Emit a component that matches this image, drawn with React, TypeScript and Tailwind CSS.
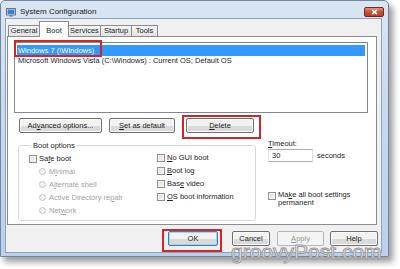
import React from "react";

function Check() {
  return (
    <span className="inline-block h-[8px] w-[8px] shrink-0 border border-[#8e8f8f] bg-linear-to-br from-[#d8d8d8] to-[#fafafa] shadow-[inset_0_0_0_1px_#f4f4f4]" />
  );
}

function Radio() {
  return (
    <span className="inline-block h-[7px] w-[7px] shrink-0 rounded-full border border-[#c4c4c4] bg-[#f2f2f2]" />
  );
}

function Btn(props: {
  w: string;
  children: React.ReactNode;
  primary?: boolean;
  disabled?: boolean;
}) {
  const base =
    "flex h-[15px] shrink-0 items-center justify-center rounded-[2px] border leading-none";
  const look = props.disabled
    ? "border-[#b5b8bb] bg-[#f4f4f4] text-[#9a9a9a]"
    : props.primary
      ? "border-[#3c7fb1] bg-linear-to-b from-[#f2f2f2] from-50% to-[#dadada] to-50% shadow-[inset_0_0_0_1px_#9ed4f3]"
      : "border-[#707070] bg-linear-to-b from-[#f2f2f2] from-50% to-[#dadada] to-50% shadow-[inset_0_0_0_1px_#fbfbfb]";
  return <div className={`${base} ${look} ${props.w}`}>{props.children}</div>;
}

function U({ c }: { c: string }) {
  return <span className="underline underline-offset-1">{c}</span>;
}

export default function App() {
  return (
    <div className="relative h-[269px] w-[400px] overflow-hidden bg-white font-['Liberation_Sans',Arial,sans-serif] text-[7.5px] text-[#1e1e1e]">
      {/* window */}
      <div className="flex h-[257px] w-[389px] flex-col rounded-t-[5px] border border-[#72869f] bg-linear-to-b from-[#dae5f3] via-[#c6d8ee] to-[#bad0ea] shadow-[4px_5px_6px_rgba(0,0,0,0.4)]">
        {/* title bar */}
        <div className="flex h-[17px] shrink-0 items-start">
          <svg width="10" height="9" viewBox="0 0 10 9" className="ml-[5px] mt-[7px]">
            <rect x="0.5" y="0.5" width="9" height="6.5" fill="#e9eef5" stroke="#6b7687" />
            <rect x="1.5" y="1.5" width="7" height="4.5" fill="#3a7fd0" />
            <rect x="3" y="7" width="4" height="1.6" fill="#7c8796" />
          </svg>
          <span className="ml-[4px] mt-[6px] text-[8px] leading-[10px] text-[#1a1a1a]">
            System Configuration
          </span>
          <div className="ml-auto mr-[4px] mt-[6px] flex h-[10px] w-[20px] items-center justify-center rounded-[2px] border border-[#6e2a20] bg-linear-to-b from-[#e3937f] via-[#c94c36] to-[#b8412b]">
            <svg width="7" height="6" viewBox="0 0 7 6">
              <path d="M1 0.8 L6 5.2 M6 0.8 L1 5.2" stroke="#fff" strokeWidth="1.6" />
            </svg>
          </div>
        </div>

        {/* client area */}
        <div className="ml-[4px] mr-[6px] flex h-[235px] flex-col border border-[#8ea3bd] bg-[#f0f0f0]">
          {/* tabs */}
          <div className="flex h-[17px] items-end pl-[3px] pt-[2px]">
            {[
              ["General", "w-[32px]"],
              ["Boot", "w-[30px]"],
              ["Services", "w-[33px]"],
              ["Startup", "w-[32px]"],
              ["Tools", "w-[27px]"],
            ].map(([t, w], i) =>
              i === 1 ? (
                <div
                  key={t}
                  className={`relative z-10 -mb-px -ml-px flex h-[16px] items-start justify-center border border-b-0 border-[#898c95] bg-white pt-[3px] ${w}`}
                >
                  {t}
                </div>
              ) : (
                <div
                  key={t}
                  className={`-ml-px flex h-[11px] items-center justify-center border border-b-0 border-[#898c95] bg-linear-to-b from-[#f6f6f6] to-[#e3e3e3] ${w}`}
                >
                  {t}
                </div>
              ),
            )}
          </div>

          {/* tab panel */}
          <div className="ml-px flex h-[189px] w-[370px] flex-col border border-[#898c95] bg-white">
            {/* list */}
            <div className="ml-[6px] mt-[5px] h-[71px] w-[354px] border border-[#828790] px-[2px] pt-[2px]">
              <div className="flex h-[11px] items-center bg-[#3399ff] pl-px text-white">
                Windows 7 (\Windows)
              </div>
              <div className="flex h-[10px] items-center pl-px">
                Microsoft Windows Vista (C:\Windows) : Current OS; Default OS
              </div>
            </div>

            {/* list buttons */}
            <div className="mt-[5px] flex">
              <div className="ml-[11px]">
                <Btn w="w-[83px]">
                  Ad<U c="v" />anced options...
                </Btn>
              </div>
              <div className="ml-[7px]">
                <Btn w="w-[66px]">
                  <U c="S" />et as default
                </Btn>
              </div>
              <div className="ml-[11px]">
                <Btn w="w-[68px]">
                  <U c="D" />elete
                </Btn>
              </div>
            </div>

            {/* options */}
            <div className="mt-[8px] flex">
              <fieldset className="ml-[10px] h-[80px] w-[238px] rounded-[3px] border border-[#d5d9de] pl-[10px]">
                <legend className="ml-[2px] px-[2px] leading-[9px]">Boot options</legend>
                <div className="mt-[2px] grid grid-cols-[128px_1fr]">
                  <div className="flex flex-col">
                    <div className="flex h-[13px] items-center gap-[2px]">
                      <Check />
                      <span>
                        Sa<U c="f" />e boot
                      </span>
                    </div>
                    {[
                      ["M", "i", "nimal"],
                      ["A", "l", "ternate shell"],
                      ["Active Directory re", "p", "air"],
                      ["Net", "w", "ork"],
                    ].map(([a, b, c]) => (
                      <div key={a + c} className="ml-[10px] flex h-[13px] items-center gap-[3px] text-[#a3a3a3]">
                        <Radio />
                        <span>
                          {a}
                          <U c={b} />
                          {c}
                        </span>
                      </div>
                    ))}
                  </div>
                  <div className="-mt-px flex flex-col">
                    {[
                      ["", "N", "o GUI boot"],
                      ["", "B", "oot log"],
                      ["Bas", "e", " video"],
                      ["", "O", "S boot information"],
                    ].map(([a, b, c]) => (
                      <div key={b + c} className="flex h-[13px] items-center gap-[2px]">
                        <Check />
                        <span>
                          {a}
                          <U c={b} />
                          {c}
                        </span>
                      </div>
                    ))}
                  </div>
                </div>
              </fieldset>

              <div className="ml-[12px] flex flex-col">
                <div className="-mt-[2px] leading-[9px]">
                  <U c="T" />imeout:
                </div>
                <div className="mt-px flex items-center">
                  <div className="flex h-[13px] w-[45px] items-center border border-[#abadb3] border-l-[#e2e3ea] border-r-[#dbdfe6] pl-[3px]">
                    30
                  </div>
                  <span className="ml-[4px]">seconds</span>
                </div>
                <div className="mt-[30px] flex items-start gap-[2px]">
                  <Check />
                  <span className="-mt-[1px] leading-[8px]">
                    Ma<U c="k" />e all boot settings
                    <br />
                    permanent
                  </span>
                </div>
              </div>
            </div>
          </div>

          {/* dialog buttons */}
          <div className="mt-[6px] flex justify-end pr-[3px]">
            <Btn w="w-[50px]" primary>
              OK
            </Btn>
            <div className="ml-[14px]">
              <Btn w="w-[38px]">Cancel</Btn>
            </div>
            <div className="ml-[7px]">
              <Btn w="w-[47px]" disabled>
                <U c="A" />pply
              </Btn>
            </div>
            <div className="ml-[6px]">
              <Btn w="w-[48px]">Help</Btn>
            </div>
          </div>
        </div>
      </div>

      {/* red highlight boxes */}
      <div className="absolute left-[14px] top-[40px] h-[17px] w-[88px] border-2 border-[#d3262b]" />
      <div className="absolute left-[182px] top-[115px] h-[24px] w-[79px] border-2 border-[#d3262b]" />
      <div className="absolute left-[162px] top-[229px] h-[23px] w-[60px] border-2 border-[#d3262b]" />

      {/* watermark */}
      <div className="absolute left-[231px] top-[241px] font-['Liberation_Sans',Arial,sans-serif] text-[21px] leading-none text-white/80 [-webkit-text-stroke:1px_#9a9a9a]">
        groovyPost.com
      </div>
    </div>
  );
}
